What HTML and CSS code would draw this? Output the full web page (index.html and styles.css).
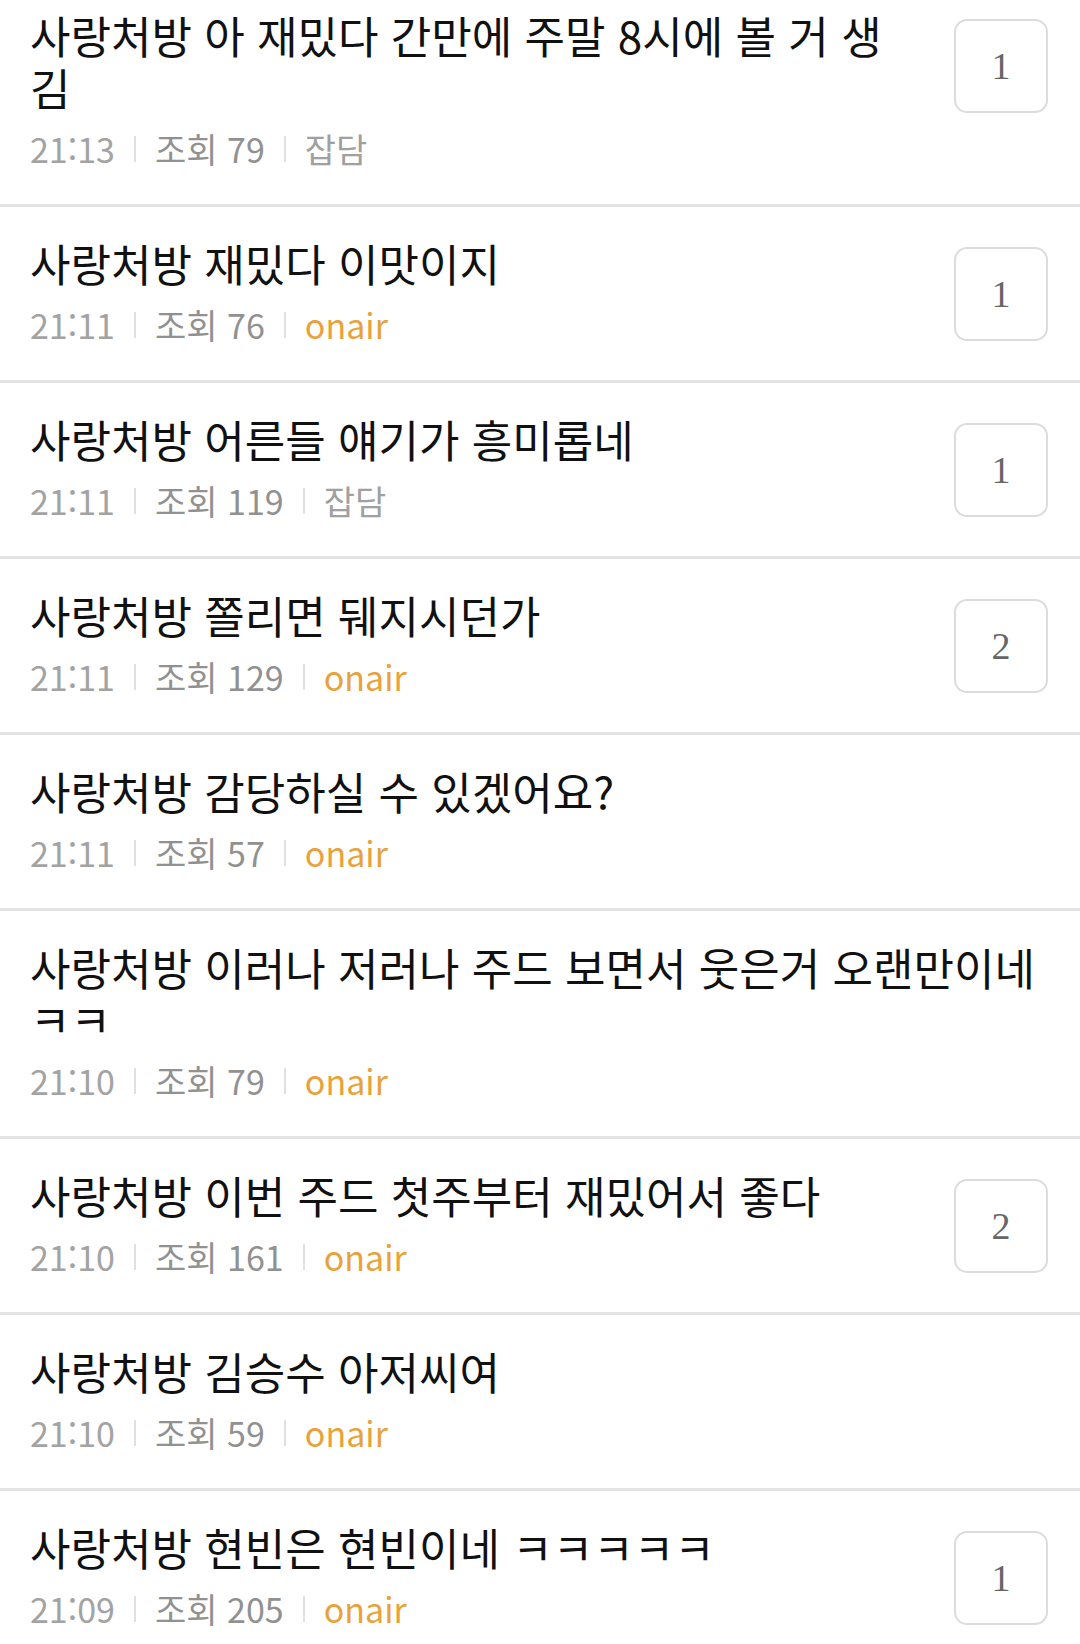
FILE: index.html
```html
<!DOCTYPE html>
<html lang="ko">
  <head>
    <meta charset="UTF-8" />
    <title>게시판</title>
    <link rel="stylesheet" href="styles.css">
  </head>
  <body>
    <ul class="board">
      <li class="post">
        <div class="post-body">
          <p class="post-title">사랑처방 아 재밌다 간만에 주말 8시에 볼 거 생김</p>
          <p class="post-meta"><span class="time">21:13</span><i class="bar"></i><span class="views">조회 79</span><i class="bar"></i><span class="cat">잡담</span></p>
        </div>
        <span class="reply">1</span>
      </li>
      <li class="post">
        <div class="post-body">
          <p class="post-title">사랑처방 재밌다 이맛이지</p>
          <p class="post-meta"><span class="time">21:11</span><i class="bar"></i><span class="views">조회 76</span><i class="bar"></i><span class="cat onair">onair</span></p>
        </div>
        <span class="reply">1</span>
      </li>
      <li class="post">
        <div class="post-body">
          <p class="post-title">사랑처방 어른들 얘기가 흥미롭네</p>
          <p class="post-meta"><span class="time">21:11</span><i class="bar"></i><span class="views">조회 119</span><i class="bar"></i><span class="cat">잡담</span></p>
        </div>
        <span class="reply">1</span>
      </li>
      <li class="post">
        <div class="post-body">
          <p class="post-title">사랑처방 쫄리면 뒈지시던가</p>
          <p class="post-meta"><span class="time">21:11</span><i class="bar"></i><span class="views">조회 129</span><i class="bar"></i><span class="cat onair">onair</span></p>
        </div>
        <span class="reply">2</span>
      </li>
      <li class="post">
        <div class="post-body">
          <p class="post-title">사랑처방 감당하실 수 있겠어요?</p>
          <p class="post-meta"><span class="time">21:11</span><i class="bar"></i><span class="views">조회 57</span><i class="bar"></i><span class="cat onair">onair</span></p>
        </div>
      </li>
      <li class="post">
        <div class="post-body">
          <p class="post-title">사랑처방 이러나 저러나 주드 보면서 웃은거 오랜만이네 ㅋㅋ</p>
          <p class="post-meta"><span class="time">21:10</span><i class="bar"></i><span class="views">조회 79</span><i class="bar"></i><span class="cat onair">onair</span></p>
        </div>
      </li>
      <li class="post">
        <div class="post-body">
          <p class="post-title">사랑처방 이번 주드 첫주부터 재밌어서 좋다</p>
          <p class="post-meta"><span class="time">21:10</span><i class="bar"></i><span class="views">조회 161</span><i class="bar"></i><span class="cat onair">onair</span></p>
        </div>
        <span class="reply">2</span>
      </li>
      <li class="post">
        <div class="post-body">
          <p class="post-title">사랑처방 김승수 아저씨여</p>
          <p class="post-meta"><span class="time">21:10</span><i class="bar"></i><span class="views">조회 59</span><i class="bar"></i><span class="cat onair">onair</span></p>
        </div>
      </li>
      <li class="post">
        <div class="post-body">
          <p class="post-title">사랑처방 현빈은 현빈이네 ㅋㅋㅋㅋㅋ</p>
          <p class="post-meta"><span class="time">21:09</span><i class="bar"></i><span class="views">조회 205</span><i class="bar"></i><span class="cat onair">onair</span></p>
        </div>
        <span class="reply">1</span>
      </li>
    </ul>
  </body>
</html>
```

FILE: styles.css
```css
body {
  margin: 0;
  background: #fff;
  font-family: "Noto Sans CJK KR", "Noto Sans", sans-serif;
  overflow: hidden;
}

/* 목록 (스크롤된 상태라 첫 줄이 조금 잘림) */
.board {
  list-style: none;
  margin: -21px 0 0;
  padding: 0;
}
.post {
  display: flex;
  align-items: flex-start;
  gap: 60px;
  padding: 30px 32px 35px 30px;
  border-bottom: 3px solid #e3e3e3;
}
.post-body {
  flex: 1;
  min-width: 0;
}

.post-title {
  margin: 0;
  font-size: 44px;
  line-height: 52px;
  color: #111;
}

/* 시간 | 조회 | 말머리 */
.post-meta {
  display: flex;
  align-items: center;
  margin: 16px 0 0;
  font-size: 34px;
  line-height: 40px;
  color: #a3a3a3;
}
.post-meta .views {
  color: #919191;
}
.post-meta .cat {
  color: #a0a0a0;
}
.post-meta .onair {
  color: #e9a23b;
}
.bar {
  width: 2px;
  height: 26px;
  margin: 0 19px;
  background: #e0e0e0;
}

/* 댓글 수 */
.reply {
  flex: none;
  display: flex;
  align-items: center;
  justify-content: center;
  box-sizing: border-box;
  width: 94px;
  height: 94px;
  margin-top: 10px;
  border: 2px solid #dcdcdc;
  border-radius: 13px;
  font-family: "Liberation Serif", serif;
  font-size: 38px;
  color: #666;
}
```
